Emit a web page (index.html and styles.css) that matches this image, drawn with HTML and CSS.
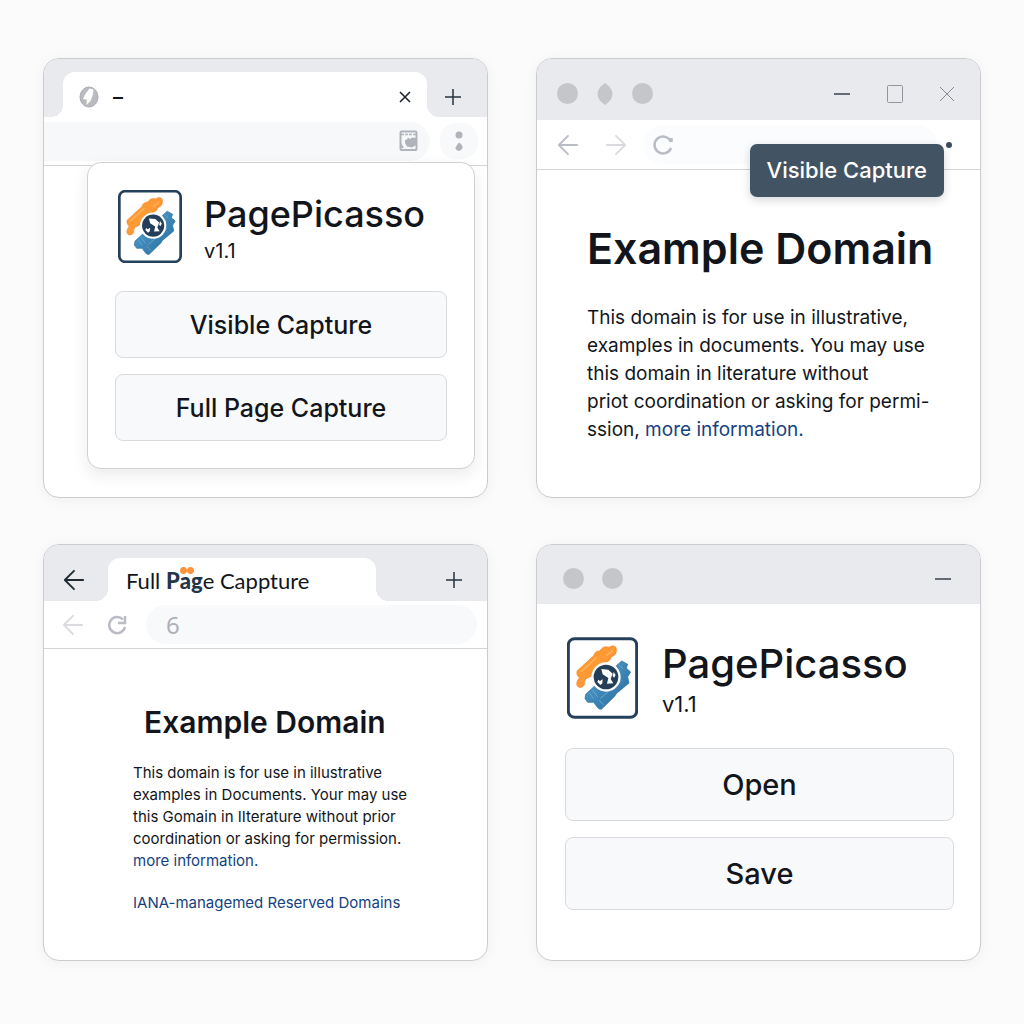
FILE: index.html
```html
<!DOCTYPE html>
<html lang="en">
<head>
<meta charset="utf-8">
<meta name="viewport" content="width=device-width, initial-scale=1">
<title>PagePicasso</title>
<link rel="stylesheet" href="styles.css">
</head>
<body>
<svg class="defs" aria-hidden="true">
  <defs>
    <linearGradient id="orange" x1="0" y1="0" x2="1" y2="1"><stop offset="0" stop-color="#ff9a2e"/><stop offset=".5" stop-color="#fd9a36"/><stop offset="1" stop-color="#ee701c"/></linearGradient>
    <linearGradient id="blue" x1="0" y1="0" x2="1" y2="1"><stop offset="0" stop-color="#5aa5d2"/><stop offset="1" stop-color="#22699c"/></linearGradient>
    <symbol id="logo" viewBox="51 47 213 244">
      <rect x="55" y="51" width="205" height="236" rx="19" fill="#fff" stroke="#24405a" stroke-width="9"/>
      <path d="M81 148 L131 102 Q135 88 148 88 L160 77 Q169 73 177 77 Q188 68 197 76 Q203 87 195 99 L184 106 Q181 117 170 121 L150 132 L128 155 Q126 166 108 171 L103 180 Q106 192 94 197 Q82 199 80 187 Q80 178 88 168 Q78 160 81 148Z" fill="url(#orange)" stroke="#f58220" stroke-width="2"/>
      <path d="M93 150 L138 109 M170 101 L188 88" stroke="#ffb65e" stroke-width="4" fill="none" stroke-linecap="round"/>
      <path d="M199 132 L215 118 L233 128 L229 140 L242 151 L233 165 L237 184 L199 216 L194 224 L154 263 Q145 263 142 257 L131 242 L113 242 L105 231 L107 218 L133 194 L160 209 L190 200 L209 172Z" fill="url(#blue)" stroke="#266b9d" stroke-width="2"/>
      <path d="M118 214 l13 17 M128 206 l15 20 M207 130 l12 12 M147 235 l14 15 M151 230 L215 176" stroke="#7ab8dc" stroke-width="2" fill="none"/>
      <circle cx="168" cy="166" r="41" fill="#fff" stroke="#fff" stroke-width="6"/>
      <circle cx="168" cy="166" r="37" fill="#243e59"/>
      <path d="M154 142 L175 144 L188 156 L182 172 L190 185 L171 186 L175 169 L158 158Z M145 174 L150 178 L158 173 L157 185 L151 190 L142 181Z M191 151 L197 160 L192 168 L188 163Z" fill="#fff"/>
    </symbol>
    <symbol id="back" viewBox="0 0 24 24"><path d="M22 12H2M12 2L2 12l10 10" fill="none" stroke="currentColor" stroke-width="2" stroke-linecap="round" stroke-linejoin="round"/></symbol>
    <symbol id="plus" viewBox="0 0 18 18"><path d="M9 1v16M1 9h16" fill="none" stroke="currentColor" stroke-width="1.5"/></symbol>
    <symbol id="minus" viewBox="0 0 18 18"><path d="M1 9h16" fill="none" stroke="currentColor" stroke-width="1.5"/></symbol>
  </defs>
</svg>
<main class="board">
  <section class="window">
    <header class="tabbar">
      <div class="tab tab-blank">
        <svg width="20" height="22" viewBox="0 0 20 22" aria-hidden="true"><ellipse cx="10" cy="11" rx="9" ry="10" fill="#b9bbc1" stroke="#a9acb3"/><path d="M10.500 2.500 L14.500 3.500 L13.800 9 L11.500 15 L7.500 19 L8 13.500 L4 13.200 L6 8.500Z" fill="#fff"/></svg>
        <span class="tab-dash">–</span>
        <button class="icon-btn push" aria-label="Close tab"><svg width="12" height="12" viewBox="0 0 12 12"><path d="M1 1l10 10M11 1L1 11" stroke="#1b2128" stroke-width="1.500"/></svg></button>
      </div>
      <button class="icon-btn new-tab" aria-label="New tab"><svg width="18" height="18"><use href="#plus"/></svg></button>
    </header>
    <div class="toolbar toolbar-flush">
      <div class="address address-flush">
        <svg width="20" height="22" viewBox="0 0 20 22" aria-hidden="true"><rect x="1.500" y="1.500" width="16" height="18.500" rx="1" fill="none" stroke="#b0b3ba" stroke-width="2"/><path d="M2 4.500h15" stroke="#b0b3ba" stroke-width="1.500" stroke-dasharray="3 1"/><path d="M6 10 L8 9.500 L9 7.500 L11 9 L13 7.500 L17 8 V15 L13 17.500 L8 16.500 L6 13Z M2 13 L5 18 H2Z" fill="#b0b3ba"/></svg>
      </div>
      <button class="menu-btn" aria-label="Menu"><svg width="10" height="24" viewBox="0 0 10 24"><circle cx="5" cy="6" r="3.500" fill="#b0b3ba"/><path d="M5 13.500 Q9 16 8.500 19 Q7 22 5 22 Q1.500 21 1.500 18.500 Q3 16 5 13.500Z" fill="#b0b3ba"/></svg></button>
    </div>
    <div class="popup">
      <div class="brand">
        <svg class="logo" role="img" aria-label="PagePicasso logo"><use href="#logo"/></svg>
        <div><h2 class="brand-name">PagePicasso</h2><p class="version">v1.1</p></div>
      </div>
      <button class="action">Visible Capture</button>
      <button class="action">Full Page Capture</button>
    </div>
  </section>

  <section class="window">
    <header class="titlebar">
      <span class="dot"></span>
      <svg width="16" height="22" viewBox="0 0 16 22" aria-hidden="true"><path d="M8 0 Q15.500 5 15.500 11 Q15.500 17 8 22 Q.5 17 .5 11 Q.5 5 8 0Z" fill="#c5c6ca"/></svg>
      <span class="dot"></span>
      <div class="controls">
        <button class="icon-btn" aria-label="Minimize"><svg width="18" height="18"><use href="#minus"/></svg></button>
        <button class="icon-btn" aria-label="Maximize"><svg width="16" height="18" viewBox="0 0 16 18"><rect x=".5" y=".5" width="15" height="17" rx="1" fill="none" stroke="#92959c"/></svg></button>
        <button class="icon-btn" aria-label="Close"><svg width="16" height="16" viewBox="0 0 16 16"><path d="M1 1l14 14M15 1L1 15" stroke="#858990"/></svg></button>
      </div>
    </header>
    <div class="toolbar toolbar-nav">
      <button class="icon-btn muted" aria-label="Back"><svg width="22" height="22"><use href="#back"/></svg></button>
      <button class="icon-btn faint" aria-label="Forward"><svg class="flip" width="22" height="22"><use href="#back"/></svg></button>
      <div class="address address-faint"><svg width="20" height="22" viewBox="0 0 20 22" aria-hidden="true"><path d="M18 8A8.500 8.500 0 1 0 18 14M18.500 4v4" fill="none" stroke="#b9bcc4" stroke-width="2.500"/></svg></div>
      <span class="status-dot"></span>
      <div class="tooltip" role="tooltip">Visible Capture</div>
    </div>
    <article class="page">
      <h1 class="page-title">Example Domain</h1>
      <p class="page-text">This domain is for use in illustrative,<br>examples in documents. You may use<br>this domain in literature without<br>priot coordination or asking for permi-<br>ssion, <a href="#">more information.</a></p>
    </article>
  </section>

  <section class="window">
    <header class="tabbar tabbar-back">
      <button class="icon-btn tab-back" aria-label="Back"><svg width="22" height="22"><use href="#back"/></svg></button>
      <div class="tab tab-titled"><span>Full <b>P<span class="accent">a</span>g</b>e Cappture</span></div>
      <button class="icon-btn new-tab" aria-label="New tab"><svg width="18" height="18"><use href="#plus"/></svg></button>
    </header>
    <div class="toolbar toolbar-small">
      <button class="icon-btn faint" aria-label="Back"><svg width="22" height="22"><use href="#back"/></svg></button>
      <button class="icon-btn muted" aria-label="Reload"><svg width="20" height="20" viewBox="0 0 20 20"><path d="M18 12A8 8 0 1 1 16 4.500M18 1v7h-7" fill="none" stroke="#b9bcc4" stroke-width="2.500"/></svg></button>
      <input class="address address-input" type="text" value="6" aria-label="Address">
    </div>
    <article class="page page-small">
      <h1 class="page-title">Example Domain</h1>
      <p class="page-text">This domain is for use in illustrative<br>examples in Documents. Your may use<br>this Gomain in IIterature without prior<br>coordination or asking for permission.<br><a href="#">more information.</a></p>
      <p class="page-text"><a href="#">IANA-managemed Reserved Domains</a></p>
    </article>
  </section>

  <section class="window">
    <header class="titlebar titlebar-two">
      <span class="dot"></span><span class="dot"></span>
      <div class="controls"><button class="icon-btn" aria-label="Minimize"><svg width="18" height="18"><use href="#minus"/></svg></button></div>
    </header>
    <div class="panel">
      <div class="brand brand-large">
        <svg class="logo" role="img" aria-label="PagePicasso logo"><use href="#logo"/></svg>
        <div><h2 class="brand-name">PagePicasso</h2><p class="version">v1.1</p></div>
      </div>
      <button class="action">Open</button>
      <button class="action">Save</button>
    </div>
  </section>
</main>
</body>
</html>
```
FILE: styles.css
```css
* { box-sizing: border-box; }
body { margin: 0; background: #fbfbfb; color: #12161c; font-family: Inter, "Liberation Sans", sans-serif; }
h1, h2, p { margin: 0; }
button { font: inherit; color: inherit; cursor: pointer; }
svg { display: block; flex: none; }
a { color: #15427f; text-decoration: none; }
.defs { position: absolute; width: 0; height: 0; }

.board { display: grid; grid-template-columns: repeat(2, minmax(0, 1fr)); gap: 46px 48px; padding: 58px 43px 64px; }
.window { background: #fff; border: 1px solid #cbccd0; border-radius: 16px; box-shadow: 0 2px 14px rgba(30, 35, 45, .05); }
.icon-btn { display: flex; padding: 0; border: 0; background: none; color: #36424e; }
.muted { color: #babdc5; }
.faint { color: #d9dbdf; }
.flip { transform: scaleX(-1); }
.push { margin-left: auto; }

.tabbar { display: flex; align-items: flex-end; height: 58px; padding-left: 19px; background: #e9eaee; border-radius: 15px 15px 0 0; }
.tab { position: relative; display: flex; align-items: center; height: 45px; background: #fff; border-radius: 12px 12px 0 0; }
.tab::before, .tab::after { content: ""; position: absolute; bottom: 0; width: 12px; height: 12px; }
.tab::before { right: 100%; background: radial-gradient(circle at 0 0, transparent 12px, #fff 12px); }
.tab::after { left: 100%; background: radial-gradient(circle at 100% 0, transparent 12px, #fff 12px); }
.tab-blank { flex: 1; gap: 14px; padding: 4px 16px 0; }
.tab-dash { font-size: 20px; font-weight: 500; }
.new-tab { justify-content: center; width: 60px; padding: 0 8px 11px 0; color: #27333d; }
.tabbar-back { padding-left: 0; height: 56px; }
.tab-back { width: 64px; padding: 0 0 10px 19px; color: #1f2a33; }
.tab-titled { flex: 1; height: 43px; padding: 2px 18px 0; font-family: Lato, sans-serif; font-size: 22px; white-space: nowrap; }
.tab-titled b { font-weight: 900; color: #24364a; }
.tabbar-back .new-tab { width: 111px; padding: 0 0 12px 45px; }
.accent { position: relative; }
.accent::before { content: ""; position: absolute; left: 0; top: 0; width: 14px; height: 7px; background: radial-gradient(circle, #fb923c 3px, transparent 4px) 0 0 / 7px 7px; }

.toolbar { position: relative; display: flex; align-items: center; height: 49px; border-bottom: 1px solid #d3d4d8; }
.address { display: flex; align-items: center; height: 39px; background: #f7f8fa; border: 0; border-radius: 20px; }
.toolbar-flush { gap: 10px; padding-right: 9px; }
.address-flush { flex: 1; justify-content: flex-end; padding-right: 11px; border-radius: 0 20px 20px 0; }
.menu-btn { display: flex; align-items: center; justify-content: center; width: 38px; height: 36px; padding: 0; border: 0; border-radius: 16px; background: #f8f9fa; }
.toolbar-nav { height: 50px; gap: 26px; padding: 0 28px 0 20px; }
.address-faint { flex: 1; margin-left: -10px; padding-left: 10px; background: #fbfcfd; }
.status-dot { width: 6px; height: 6px; border-radius: 50%; background: #3d4c5b; }
.toolbar-nav .status-dot { margin-left: -17px; }
.toolbar-small { gap: 23px; height: 48px; padding: 0 10px 0 18px; }
.address-input { flex: 1; min-width: 0; margin-left: -4px; padding: 0 20px; background: #f8f9fb; color: #aeb1b7; font: 24px "Noto Sans", sans-serif; }
.tooltip { position: absolute; top: 24px; right: 36px; padding: 12px 17px; border-radius: 7px; background: #425463; color: #fff; font-size: 22px; font-weight: 500; line-height: 29px; white-space: nowrap; box-shadow: 0 3px 10px rgba(30, 35, 45, .18); }

.titlebar { display: flex; align-items: center; gap: 19px; height: 61px; padding: 8px 25px 0 20px; background: #e9eaee; border-radius: 15px 15px 0 0; }
.dot { width: 21px; height: 21px; border-radius: 50%; background: #c5c6ca; }
.titlebar-two { gap: 18px; height: 59px; padding: 8px 28px 0 26px; }
.controls { display: flex; align-items: center; gap: 36px; margin-left: auto; }

.popup { position: relative; margin: -4px 12px 28px 43px; padding: 27px 27px 27px; background: #fff; border: 1px solid #cfd1d5; border-radius: 14px; box-shadow: 0 6px 16px rgba(30, 35, 45, .09); }
.brand { display: flex; align-items: flex-start; gap: 22px; padding: 0 3px; }
.logo { width: 64px; height: 73px; }
.brand-name { font-size: 36px; font-weight: 500; line-height: 48px; }
.version { font-size: 20px; line-height: 26px; }
.action { display: block; width: 100%; height: 67px; margin-top: 16px; border: 1px solid #d9dbdf; border-radius: 8px; background: #f8f9fb; font-size: 25px; font-weight: 500; }
.brand + .action { margin-top: 27px; }

.panel { padding: 33px 26px 50px 28px; }
.brand-large { gap: 24px; padding: 0 2px; }
.brand-large .logo { width: 71px; height: 82px; }
.brand-large .brand-name { font-size: 40px; line-height: 54px; }
.brand-large .version { font-size: 22px; }
.panel .action { height: 73px; font-size: 29px; }
.panel .brand + .action { margin-top: 29px; }

.page { padding: 50px 24px 52px 50px; }
.page-title { font-size: 43px; font-weight: 600; line-height: 56px; white-space: nowrap; }
.page-text { margin-top: 28px; font-size: 19px; line-height: 28px; white-space: nowrap; }
.page-small { padding: 53px 24px 46px 89px; }
.page-small .page-title { margin-left: 11px; font-size: 30px; line-height: 40px; }
.page-small .page-text { margin-top: 20px; font-size: 15px; line-height: 22px; }
```
